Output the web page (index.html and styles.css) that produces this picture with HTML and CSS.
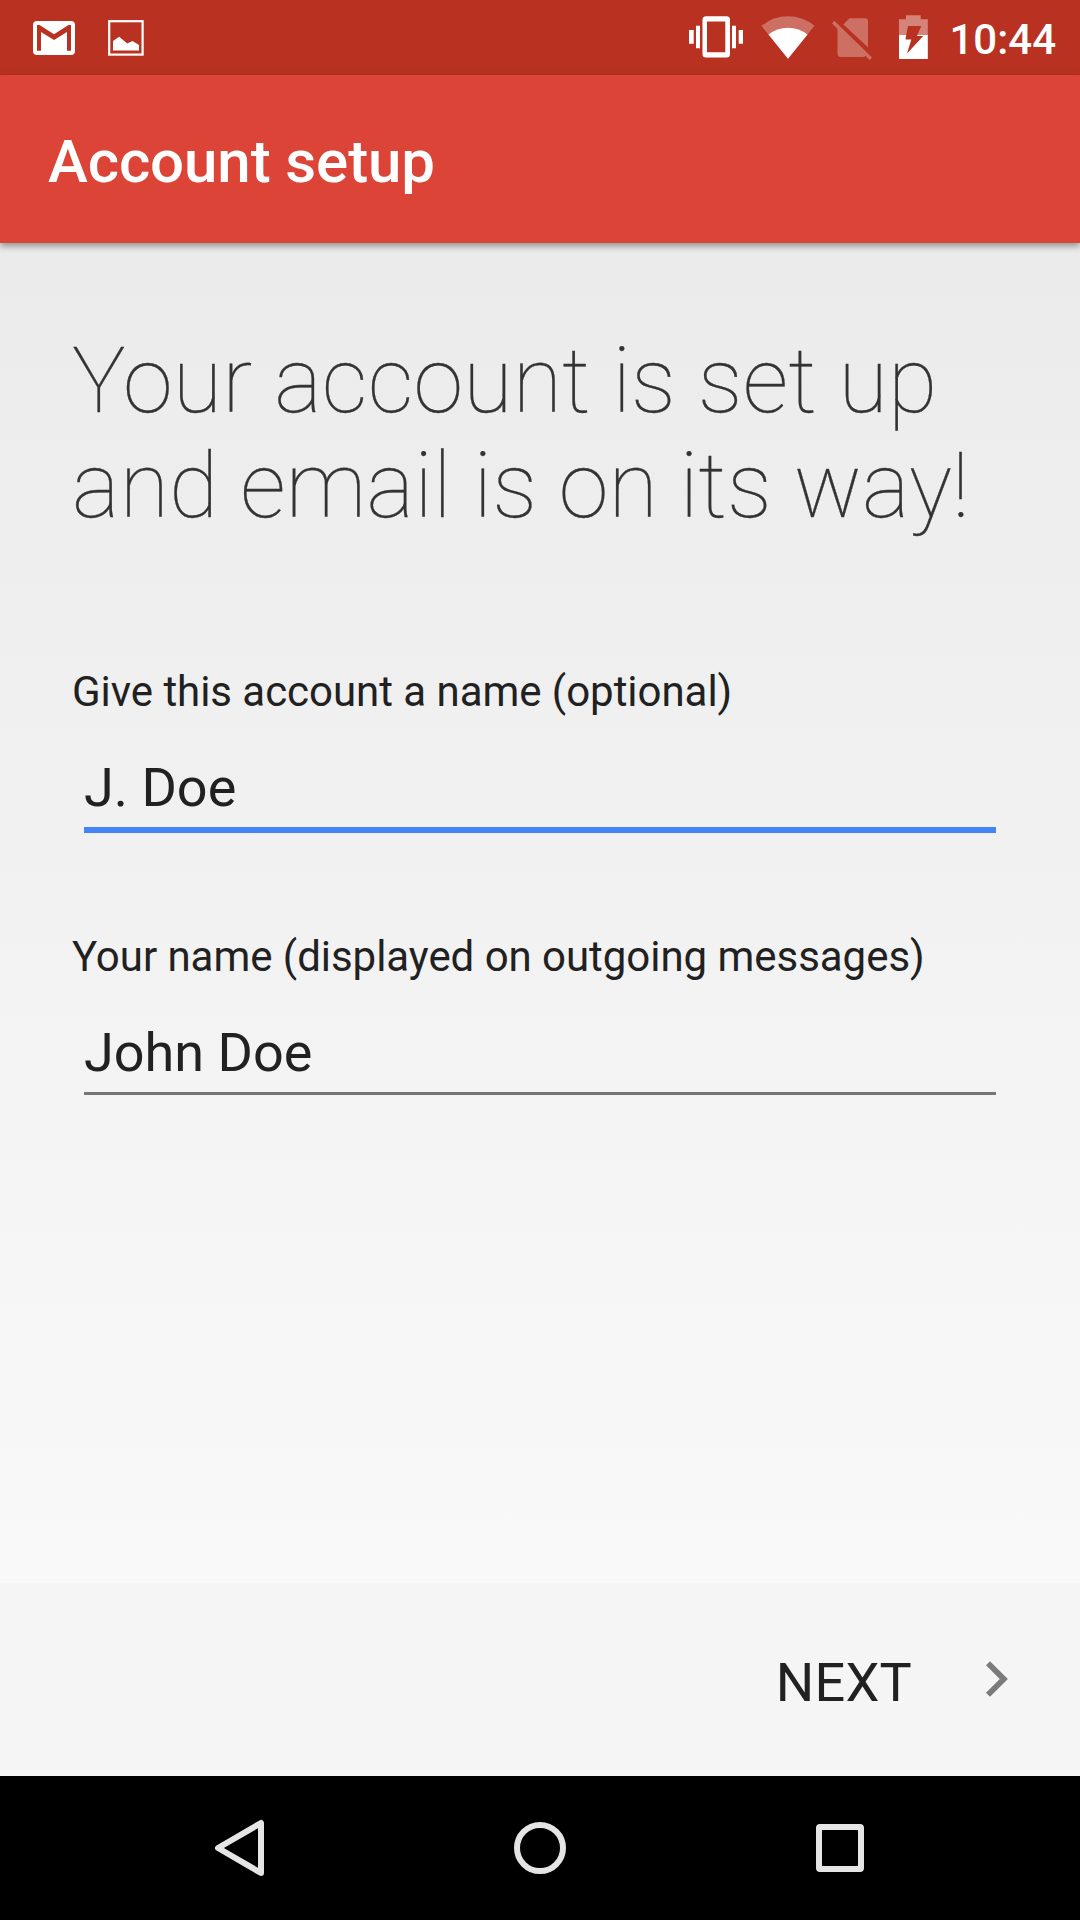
FILE: index.html
```html
<!DOCTYPE html>
<html lang="en">
<head>
<meta charset="utf-8">
<title>Account setup</title>
<link rel="stylesheet" href="styles.css">
</head>
<body>
<div class="screen">
  <div class="status-bar">
    <div class="status-group status-notifications">
      <svg width="42" height="75" viewBox="33 0 42 75" aria-label="Gmail">
        <rect x="33" y="21" width="42" height="34" rx="4" fill="#fff"/>
        <path d="M37 25h2.500L54 34.200 68.500 25H71v25.800h-4V32L54 40 41 32v18.800h-4z" fill="#b93221"/>
      </svg>
      <svg width="36" height="75" viewBox="108 0 36 75" aria-label="Picture">
        <rect x="109.200" y="21.200" width="33.400" height="33.400" fill="none" stroke="#fff" stroke-width="2.200"/>
        <path d="M113 50.500V41l6.200-4.200 8 6.600 5.300-2.400 6.500 4v5.500z" fill="#fff"/>
      </svg>
    </div>
    <div class="status-group">
      <svg class="vibrate" width="54" height="75" viewBox="689 0 54 75" aria-label="Vibrate">
        <path d="M689 30h4.700v13.700H689zM696 25.700h4v22.600h-4zM732 25.700h4v22.600h-4zM738.700 30h4.300v13.700h-4.300z" fill="#fff"/>
        <path fill-rule="evenodd" d="M706 16.300h20.500a3.500 3.500 0 0 1 3.500 3.500V54a3.500 3.500 0 0 1-3.500 3.500H706a3.500 3.500 0 0 1-3.500-3.500V19.800a3.500 3.500 0 0 1 3.500-3.500zM707 21.500v30.800h18.300V21.500z" fill="#fff"/>
      </svg>
      <svg class="wifi" width="54" height="75" viewBox="760.500 0 54 75" aria-label="Wi-Fi">
        <path d="M761 25.800Q772.500 16.200 787.500 16.200T814 25.800L787.500 58.800z" fill="#fff" fill-opacity=".3"/>
        <path d="M768 34.600Q776.500 27.700 787.500 27.700T807 34.600L787.500 58.800z" fill="#fff"/>
      </svg>
      <svg class="sim" width="40" height="75" viewBox="832 0 40 75" aria-label="No SIM card">
        <g fill="#fff" fill-opacity=".3">
          <path d="M843.300 24.400l6.200-6.100H865a3 3 0 0 1 3 3v26z"/>
          <path d="M834.300 20.700L872 57.500l-2.400 2.400-4.200-4.200q-.7 1.200-2.400 1.200h-22a3.500 3.500 0 0 1-3.500-3.500V28.700l-5.500-5.300z"/>
        </g>
      </svg>
      <svg class="battery" width="29" height="75" viewBox="899 0 29 75" aria-label="Battery charging">
        <path d="M899 19.300h7v-4h14.700v4h7.100V35h-10.400l3.900-9H908l-1.800 9H899z" fill="#fff" fill-opacity=".4"/>
        <path d="M899 35h7.200l-.7 4.500h5.800L907 53.500 923.300 36H917l.4-1h10.400v24H899z" fill="#fff"/>
      </svg>
      <span class="clock">10:44</span>
    </div>
  </div>

  <header class="app-bar"><h1 class="app-title">Account setup</h1></header>

  <main class="content">
    <h2 class="headline">Your account is set up<br>and email is on its way!</h2>
    <label class="label" for="account">Give this account a name (optional)</label>
    <input class="field field-active" id="account" type="text" value="J. Doe">
    <label class="label label-next" for="name">Your name (displayed on outgoing messages)</label>
    <input class="field" id="name" type="text" value="John Doe">
  </main>

  <footer class="footer">
    <span class="next">NEXT</span>
    <svg class="chevron" width="22" height="36" viewBox="0 0 22 36" aria-hidden="true">
      <path d="M2 2.200L17.800 18 2 33.800" fill="none" stroke="#7b7b7b" stroke-width="5.800"/>
    </svg>
  </footer>

  <nav class="nav-bar">
    <svg width="60" height="60" viewBox="210 1818 60 60" aria-label="Back">
      <path d="M261 1823v50L218 1848z" fill="none" stroke="#e5e5e5" stroke-width="6" stroke-linejoin="round"/>
    </svg>
    <svg width="60" height="60" viewBox="0 0 60 60" aria-label="Home">
      <circle cx="30" cy="30" r="23" fill="none" stroke="#e5e5e5" stroke-width="6"/>
    </svg>
    <svg width="60" height="60" viewBox="0 0 60 60" aria-label="Recent apps">
      <path fill-rule="evenodd" d="M10 6h40a4 4 0 0 1 4 4v40a4 4 0 0 1-4 4H10a4 4 0 0 1-4-4V10a4 4 0 0 1 4-4zM12 12v36h36V12z" fill="#e5e5e5"/>
    </svg>
  </nav>
</div>
</body>
</html>
```
FILE: styles.css
```css
* {
  box-sizing: border-box;
}

body {
  margin: 0;
  font-family: Roboto, sans-serif;
  color: #212121;
}

svg {
  display: block;
  flex: none;
}

.screen {
  display: flex;
  flex-direction: column;
  width: 1080px;
  height: 1920px;
  overflow: hidden;
}

.status-bar {
  display: flex;
  justify-content: space-between;
  height: 75px;
  padding: 0 24px 0 33px;
  background: #b93221;
}

.status-group {
  display: flex;
}

.status-notifications {
  gap: 33px;
}

.vibrate {
  margin-right: 17.500px;
}

.wifi {
  margin-right: 17.500px;
}

.sim {
  margin-right: 27px;
}

.battery {
  margin-right: 21px;
}

.clock {
  padding-top: 15px;
  color: #fff;
  font-size: 42px;
  font-weight: 500;
  line-height: 49px;
}

.app-bar {
  z-index: 1;
  height: 168px;
  padding: 52px 48px 0;
  background: #db4437;
  box-shadow: 0 3px 7px rgba(0, 0, 0, .4);
}

.app-title {
  margin: 0;
  color: #fff;
  font-size: 60px;
  font-weight: 500;
  letter-spacing: -.1px;
  line-height: 70px;
}

.content {
  display: flex;
  flex: 1;
  flex-direction: column;
  padding: 86px 72px 0;
  background: linear-gradient(#ebebeb, #f9f9f9);
}

.headline {
  margin: 0 0 128px;
  color: #333;
  font-size: 90px;
  font-weight: 100;
  letter-spacing: .17px;
  line-height: 105px;
  white-space: nowrap;
  -webkit-text-stroke: .3px #333;
}

.label {
  font-size: 42px;
  letter-spacing: -.04px;
  line-height: 49px;
}

.label-next {
  margin-top: 99px;
}

.field {
  height: 74px;
  margin: 40px 12px 0;
  padding: 0 0 8px;
  border: 0;
  border-bottom: 3px solid #757575;
  border-radius: 0;
  outline: 0;
  background: transparent;
  color: #212121;
  font: 54px/63px Roboto, sans-serif;
}

.field-active {
  height: 77px;
  border-bottom: 6px solid #4285f4;
}

.footer {
  display: flex;
  justify-content: flex-end;
  height: 193px;
  padding: 68px 72px 0 0;
  background: #f5f5f5;
}

.next {
  margin-right: 74px;
  font-size: 54px;
  letter-spacing: .25px;
  line-height: 63px;
}

.chevron {
  margin-top: 10px;
}

.nav-bar {
  display: flex;
  justify-content: center;
  align-items: center;
  gap: 240px;
  height: 144px;
  background: #000;
}
```
